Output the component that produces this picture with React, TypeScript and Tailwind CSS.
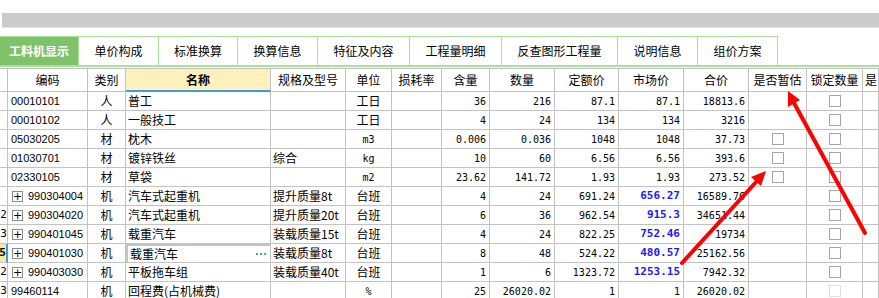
import React from 'react';

type Row = {
  n?: string;
  code: string;
  exp?: boolean;
  type: string;
  name: string;
  spec?: string;
  unit: string;
  mono?: boolean;
  qty: string;
  amt: string;
  quota: string;
  market: string;
  blue?: boolean;
  total: string;
  est?: boolean;
  faint?: boolean;
};

const rows: Row[] = [
  { code: '00010101', type: '人', name: '普工', unit: '工日', qty: '36', amt: '216', quota: '87.1', market: '87.1', total: '18813.6' },
  { code: '00010102', type: '人', name: '一般技工', unit: '工日', qty: '4', amt: '24', quota: '134', market: '134', total: '3216' },
  { code: '05030205', type: '材', name: '枕木', unit: 'm3', mono: true, qty: '0.006', amt: '0.036', quota: '1048', market: '1048', total: '37.73', est: true },
  { code: '01030701', type: '材', name: '镀锌铁丝', spec: '综合', unit: 'kg', mono: true, qty: '10', amt: '60', quota: '6.56', market: '6.56', total: '393.6', est: true },
  { code: '02330105', type: '材', name: '草袋', unit: 'm2', mono: true, qty: '23.62', amt: '141.72', quota: '1.93', market: '1.93', total: '273.52', est: true },
  { code: '990304004', exp: true, type: '机', name: '汽车式起重机', spec: '提升质量8t', unit: '台班', qty: '4', amt: '24', quota: '691.24', market: '656.27', blue: true, total: '16589.76' },
  { n: '12', code: '990304020', exp: true, type: '机', name: '汽车式起重机', spec: '提升质量20t', unit: '台班', qty: '6', amt: '36', quota: '962.54', market: '915.3', blue: true, total: '34651.44' },
  { n: '13', code: '990401045', exp: true, type: '机', name: '载重汽车', spec: '装载质量15t', unit: '台班', qty: '4', amt: '24', quota: '822.25', market: '752.46', blue: true, total: '19734' },
  { n: '15', code: '990401030', exp: true, type: '机', name: '载重汽车', spec: '装载质量8t', unit: '台班', qty: '8', amt: '48', quota: '524.22', market: '480.57', blue: true, total: '25162.56' },
  { n: '12', code: '990403030', exp: true, type: '机', name: '平板拖车组', spec: '装载质量40t', unit: '台班', qty: '1', amt: '6', quota: '1323.72', market: '1253.15', blue: true, total: '7942.32' },
  { n: '13', code: '99460114', type: '机', name: '回程费(占机械费)', unit: '%', mono: true, qty: '25', amt: '26020.02', quota: '1', market: '1', total: '26020.02', faint: true },
];

const tabs = [
  { label: '工料机显示', w: 'w-[79px]', active: true },
  { label: '单价构成', w: 'w-[80px]' },
  { label: '标准换算', w: 'w-[79px]' },
  { label: '换算信息', w: 'w-[80px]' },
  { label: '特征及内容', w: 'w-[92px]' },
  { label: '工程量明细', w: 'w-[92px]' },
  { label: '反查图形工程量', w: 'w-[116px]' },
  { label: '说明信息', w: 'w-[80px]' },
  { label: '组价方案', w: 'w-[80px]' },
];

const grid =
  'grid grid-cols-[8px_80px_38px_145px_75px_46px_50px_48px_65px_64px_65px_65px_58px_56px_16px]';
const cell = 'border-r border-b border-[#c3c3c3] overflow-hidden whitespace-nowrap flex items-center';
const cjk = "font-['Noto_Sans_CJK_SC',sans-serif] text-[12px]";
const mono = "font-['DejaVu_Sans_Mono',monospace] text-[10px]";

function Check({ faint }: { faint?: boolean }) {
  return (
    <span
      className={`block w-[12px] h-[12px] border bg-white ${faint ? 'border-[#e0e0e0]' : 'border-[#a6a6a6]'}`}
    />
  );
}

function Num({ v }: { v: string }) {
  return <div className={`${cell} justify-end pr-[3px] ${mono}`}>{v}</div>;
}

export default function App() {
  const headers = ['编码', '类别', '名称', '规格及型号', '单位', '损耗率', '含量', '数量', '定额价', '市场价', '合价', '是否暂估', '锁定数量', '是'];

  return (
    <div className="relative w-[879px] h-[298px] overflow-hidden bg-white text-black">
      <div className="h-[13px]" />
      <div className="ml-[2px] h-[14px] bg-[#cbcbcb]" />
      <div className="ml-[2px] h-[1px] bg-[#e4e4e4]" />
      <div className="h-[8px]" />

      <div className="flex h-[31px] border-b-2 border-[#a9e39a]">
        {tabs.map((t) => (
          <div
            key={t.label}
            className={`${t.w} h-full flex items-center justify-center border-t border-r border-[#a9e39a] ${cjk} ${
              t.active ? 'bg-[#7ec36a] text-white font-bold border-[#7ec36a]' : 'bg-white'
            }`}
          >
            {t.label}
          </div>
        ))}
      </div>
      <div className="h-[1px]" />

      <div className={`${grid} h-[24px] border-t border-[#c3c3c3]`}>
        <div className={cell} />
        {headers.map((h) => (
          <div
            key={h}
            className={`${cell} justify-center ${cjk} ${
              h === '名称' ? 'bg-[#fff0bd] font-bold border-b-2 border-b-[#3c9fd3]' : h === '是' ? 'justify-start pl-[2px]' : ''
            }`}
          >
            {h}
          </div>
        ))}
      </div>

      {rows.map((r, i) => {
        const sel = i === 8;
        return (
          <div key={i} className={`${grid} h-[19px]`}>
            <div
              className={`${cell} justify-end ${mono} text-[11px] ${
                sel ? 'bg-[#ffe7a3] font-bold border-r-2 border-r-[#3c9fd3]' : ''
              }`}
            >
              <span className="shrink-0">{r.n}</span>
            </div>
            <div className={`${cell} pl-[3px] font-['Liberation_Sans',sans-serif] text-[11px]`}>
              {r.exp && (
                <span className="mr-[5px] ml-[1px] w-[11px] h-[11px] border border-[#8a8a8a] flex items-center justify-center text-[11px] leading-none font-['DejaVu_Sans',sans-serif]">
                  +
                </span>
              )}
              {r.code}
            </div>
            <div className={`${cell} justify-center ${cjk}`}>{r.type}</div>
            <div
              className={`${cell} pl-[2px] ${cjk} ${
                sel ? 'border-2 border-[#3ca3d6] justify-between pr-[4px] pl-[1px]' : ''
              }`}
            >
              <span>{r.name}</span>
              {sel && (
                <span className="flex gap-[2px]">
                  <span className="w-[2px] h-[2px] bg-[#4a9fd0]" />
                  <span className="w-[2px] h-[2px] bg-[#4a9fd0]" />
                  <span className="w-[2px] h-[2px] bg-[#4a9fd0]" />
                </span>
              )}
            </div>
            <div className={`${cell} pl-[2px] ${cjk}`}>{r.spec}</div>
            <div className={`${cell} justify-center ${r.mono ? mono : cjk}`}>{r.unit}</div>
            <div className={cell} />
            <Num v={r.qty} />
            <Num v={r.amt} />
            <Num v={r.quota} />
            {r.blue ? (
              <div className={`${cell} justify-end pr-[3px] font-['DejaVu_Sans_Mono',monospace] text-[11px] font-bold text-[#1b1bf0]`}>
                {r.market}
              </div>
            ) : (
              <Num v={r.market} />
            )}
            <Num v={r.total} />
            <div className={`${cell} justify-center`}>{r.est && <Check />}</div>
            <div className={`${cell} justify-center`}>
              <Check faint={r.faint} />
            </div>
            <div className={cell} />
          </div>
        );
      })}

      <svg className="absolute inset-0 pointer-events-none" width="879" height="298">
        <line x1="865" y1="233" x2="794" y2="103" stroke="#ff0000" strokeWidth="4" strokeLinecap="round" />
        <polygon points="788,91 800,100 788,107" fill="#ff0000" />
        <line x1="682" y1="263" x2="757" y2="181" stroke="#ff0000" strokeWidth="4" strokeLinecap="round" />
        <polygon points="766,171 761,186 751,177" fill="#ff0000" />
      </svg>
    </div>
  );
}
